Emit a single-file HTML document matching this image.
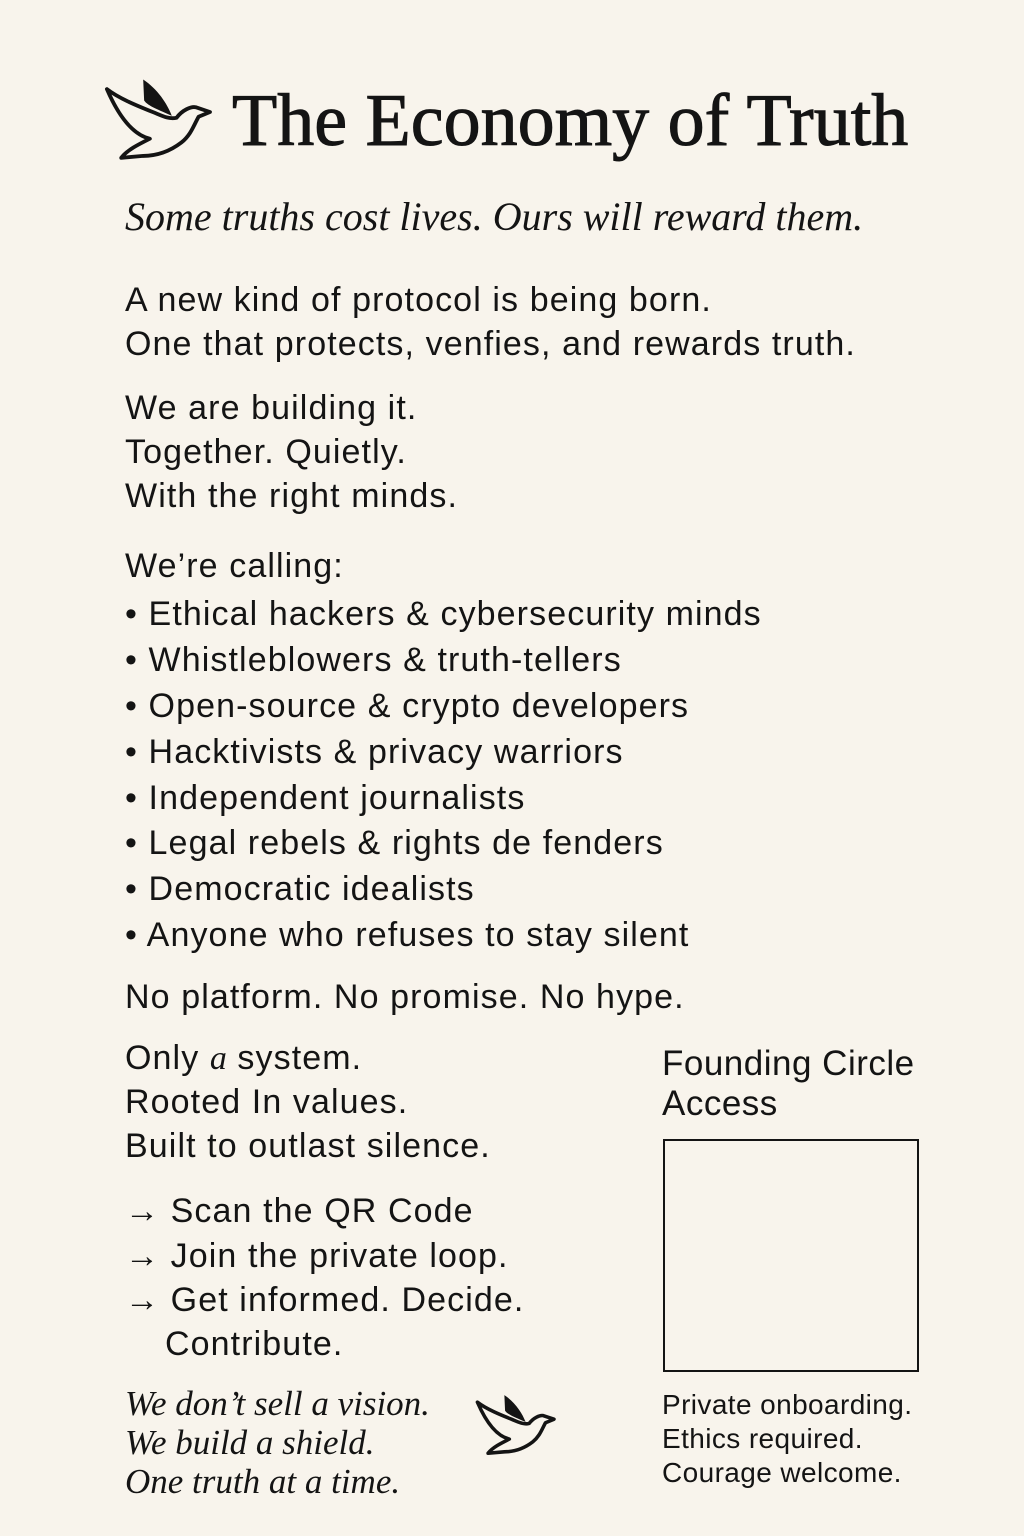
<!DOCTYPE html>
<html><head><meta charset="utf-8"><style>
body{margin:0;background:#f8f4ec;}
#p{position:relative;width:1024px;height:1536px;background:#f8f4ec;color:#141414;overflow:hidden;font-family:"Liberation Sans",sans-serif;}
.t{position:absolute;white-space:nowrap;line-height:1;}
.s{font-size:34px;letter-spacing:1.1px;}
.i{font-family:"Liberation Serif",serif;font-style:italic;letter-spacing:0;}
</style></head><body><div id="p">
<svg style="position:absolute;left:100px;top:70px" width="115" height="105" viewBox="0 0 120 110">
<path d="M7,20 C20,30 40,38 55,44 C65,48 72,52 80,50 C86,42 95,38 100,39 L115,44 L103,49 C98,58 95,68 85,76 C72,86 58,90 45,90 L22,92 C28,84 40,78 52,72 C35,68 20,50 7,20 Z" fill="none" stroke="#141414" stroke-width="4" stroke-linejoin="round"/>
<path d="M45,10 C60,20 70,35 75,48 C62,42 50,38 46,32 Z" fill="#141414"/>
</svg>
<div class="t" style="left:232px;top:84px;font-family:'Liberation Serif',serif;font-size:74px;letter-spacing:0;-webkit-text-stroke:1px #141414">The Economy of Truth</div>
<div class="t i" style="left:125px;top:197px;font-size:40px;">Some truths cost lives. Ours will reward them.</div>
<div class="t s" style="left:125px;top:283px">A new kind of protocol is being born.</div>
<div class="t s" style="left:125px;top:327px">One that protects, venfies, and rewards truth.</div>
<div class="t s" style="left:125px;top:391px">We are building it.</div>
<div class="t s" style="left:125px;top:435px">Together. Quietly.</div>
<div class="t s" style="left:125px;top:479px">With the right minds.</div>
<div class="t s" style="left:125px;top:549px">We’re calling:</div>
<div class="t s" style="left:125px;top:597px">• Ethical hackers &amp; cybersecurity minds</div>
<div class="t s" style="left:125px;top:643px">• Whistleblowers &amp; truth-tellers</div>
<div class="t s" style="left:125px;top:689px">• Open-source &amp; crypto developers</div>
<div class="t s" style="left:125px;top:735px">• Hacktivists &amp; privacy warriors</div>
<div class="t s" style="left:125px;top:781px">• Independent journalists</div>
<div class="t s" style="left:125px;top:826px">• Legal rebels &amp; rights de fenders</div>
<div class="t s" style="left:125px;top:872px">• Democratic idealists</div>
<div class="t s" style="left:125px;top:918px">• Anyone who refuses to stay silent</div>
<div class="t s" style="left:125px;top:980px">No platform. No promise. No hype.</div>
<div class="t s" style="left:125px;top:1041px">Only <span class="i">a</span> system.</div>
<div class="t s" style="left:125px;top:1085px">Rooted In values.</div>
<div class="t s" style="left:125px;top:1129px">Built to outlast silence.</div>
<div class="t s" style="left:125px;top:1194px">→ Scan the QR Code</div>
<div class="t s" style="left:125px;top:1239px">→ Join the private loop.</div>
<div class="t s" style="left:125px;top:1283px">→ Get informed. Decide.</div>
<div class="t s" style="left:165px;top:1327px">Contribute.</div>
<div class="t i" style="left:125px;top:1386px;font-size:35px">We don’t sell a vision.</div>
<div class="t i" style="left:125px;top:1425px;font-size:35px">We build a shield.</div>
<div class="t i" style="left:125px;top:1464px;font-size:35px">One truth at a time.</div>
<svg style="position:absolute;left:472px;top:1388px" width="86" height="78" viewBox="0 0 120 110">
<path d="M7,20 C20,30 40,38 55,44 C65,48 72,52 80,50 C86,42 95,38 100,39 L115,44 L103,49 C98,58 95,68 85,76 C72,86 58,90 45,90 L22,92 C28,84 40,78 52,72 C35,68 20,50 7,20 Z" fill="none" stroke="#141414" stroke-width="5" stroke-linejoin="round"/>
<path d="M45,10 C60,20 70,35 75,48 C62,42 50,38 46,32 Z" fill="#141414"/>
</svg>
<div class="t" style="left:662px;top:1046px;font-size:35px;letter-spacing:0.5px">Founding Circle</div>
<div class="t" style="left:662px;top:1086px;font-size:35px;letter-spacing:0.5px">Access</div>
<div style="position:absolute;left:663px;top:1139px;width:252px;height:229px;border:2px solid #141414"></div>
<div class="t" style="left:662px;top:1391px;font-size:28px;letter-spacing:0.4px">Private onboarding.</div>
<div class="t" style="left:662px;top:1425px;font-size:28px;letter-spacing:0.4px">Ethics required.</div>
<div class="t" style="left:662px;top:1459px;font-size:28px;letter-spacing:0.4px">Courage welcome.</div>
</div></body></html>
